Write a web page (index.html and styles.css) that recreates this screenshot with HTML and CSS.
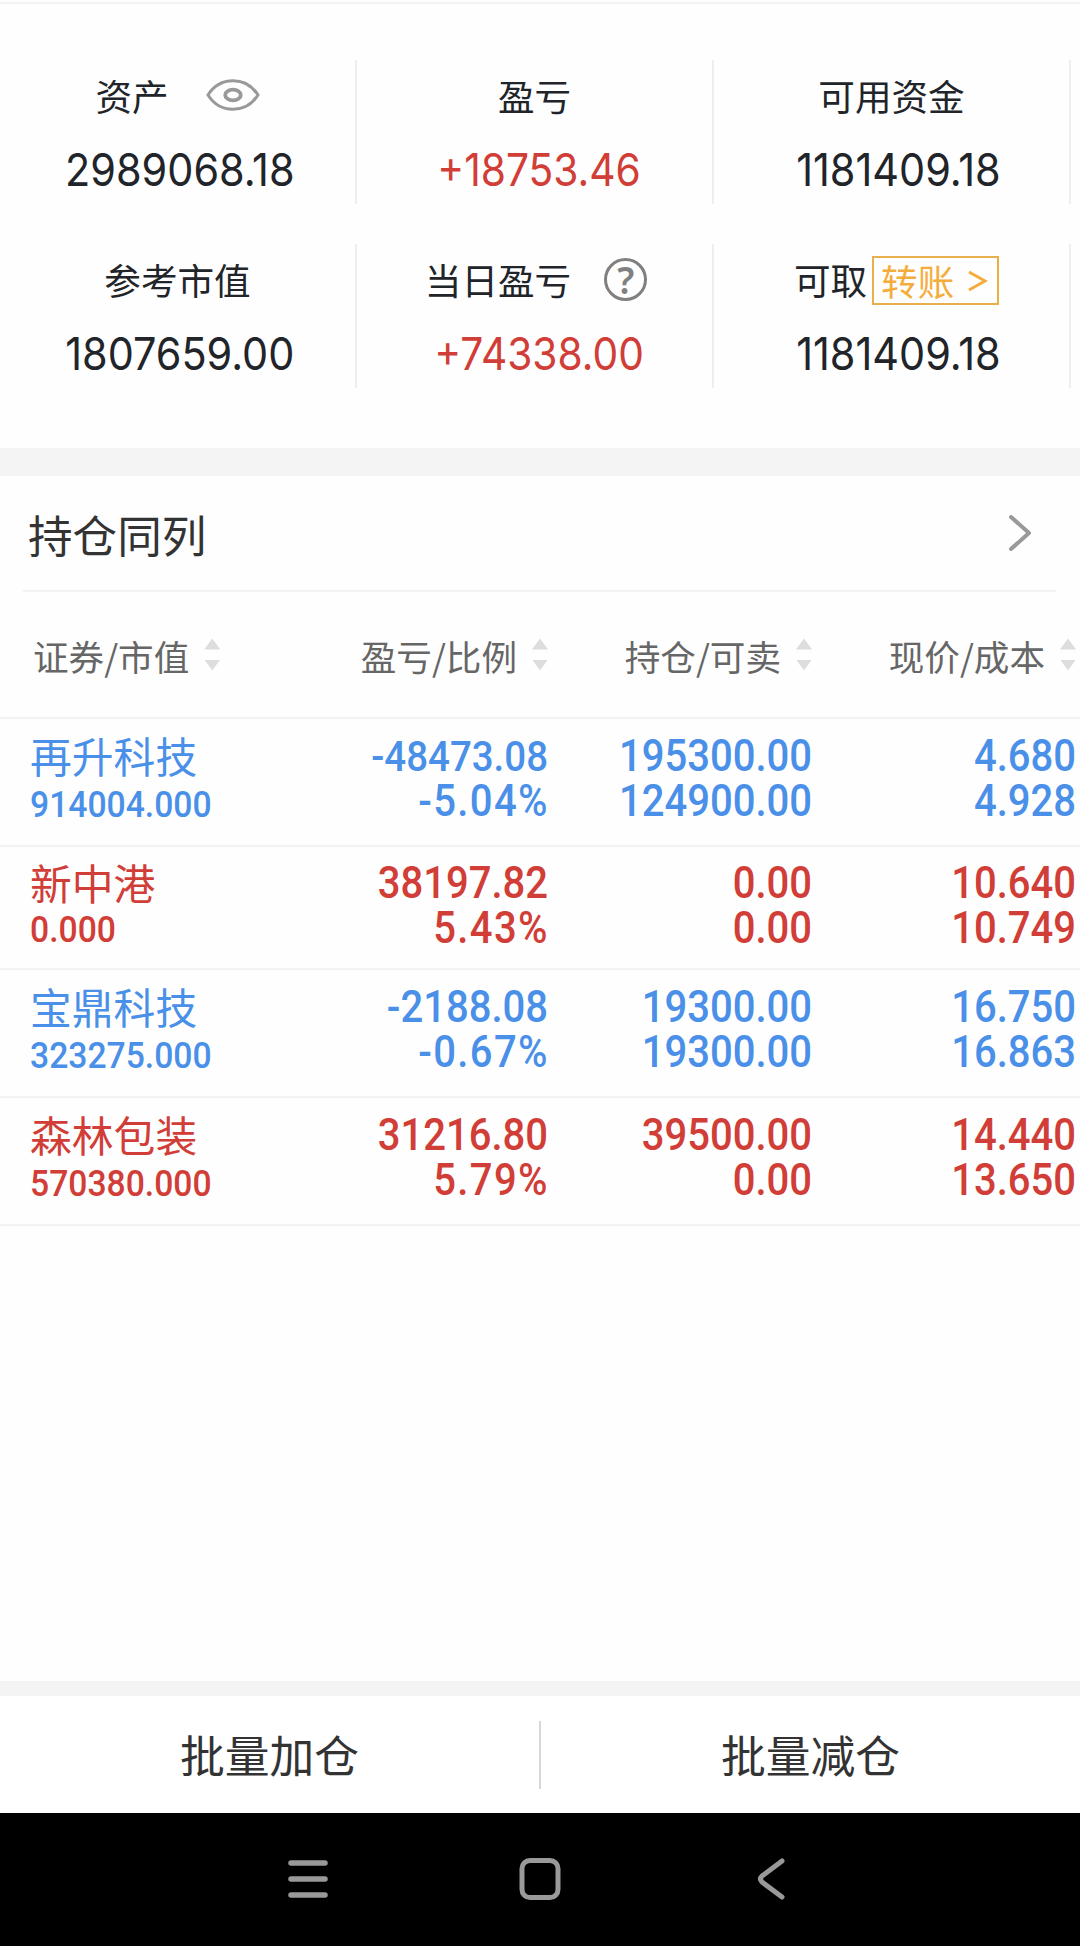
FILE: index.html
```
<!DOCTYPE html>
<html lang="zh-CN">
<head>
    <meta charset="UTF-8">
    <title>持仓</title>
    <link rel="stylesheet" href="styles.css">
</head>
<body>
    <section class="summary">
        <div class="summary-item">
            <div class="label">资产
                <svg class="eye" width="54" height="32" viewBox="0 0 54 32" fill="none" stroke="#999" stroke-width="3">
                    <path d="M2 16C14 -3 40 -3 52 16C40 35 14 35 2 16Z"/>
                    <ellipse cx="27" cy="16" rx="7.8" ry="5.3" stroke-width="3.8"/>
                </svg>
            </div>
            <div class="amount">2989068.18</div>
        </div>
        <div class="summary-item">
            <div class="label">盈亏</div>
            <div class="amount red">+18753.46</div>
        </div>
        <div class="summary-item">
            <div class="label">可用资金</div>
            <div class="amount">1181409.18</div>
        </div>
        <div class="summary-item">
            <div class="label">参考市值</div>
            <div class="amount">1807659.00</div>
        </div>
        <div class="summary-item">
            <div class="label with-help">当日盈亏<span class="help">?</span></div>
            <div class="amount red">+74338.00</div>
        </div>
        <div class="summary-item">
            <div class="label with-link">可取<a class="transfer">转账
                <svg width="20" height="22" viewBox="0 0 20 22" fill="none" stroke="#f4ad3c" stroke-width="3"><path d="M1 2L17 11L1 20"/></svg></a></div>
            <div class="amount">1181409.18</div>
        </div>
    </section>

    <section class="holdings">
        <div class="title-bar">
            <h2>持仓同列</h2>
            <svg width="24" height="38" viewBox="0 0 24 38" fill="none" stroke="#999" stroke-width="4" stroke-linecap="round" stroke-linejoin="round"><path d="M3 3L21 19L3 35"/></svg>
        </div>
        <div class="row head">
            <div class="cell"><span>证券/市值</span><i class="sort"></i></div>
            <div class="cell"><span>盈亏/比例</span><i class="sort"></i></div>
            <div class="cell"><span>持仓/可卖</span><i class="sort"></i></div>
            <div class="cell"><span>现价/成本</span><i class="sort"></i></div>
        </div>
        <div class="row stock blue">
            <div class="name"><p>再升科技</p><span>914004.000</span></div>
            <div class="nums"><p class="long">-48473.08</p><p class="percent">-5.04%</p></div>
            <div class="nums"><p>195300.00</p><p>124900.00</p></div>
            <div class="nums"><p>4.680</p><p>4.928</p></div>
        </div>
        <div class="row stock red short">
            <div class="name"><p>新中港</p><span>0.000</span></div>
            <div class="nums"><p>38197.82</p><p class="percent">5.43%</p></div>
            <div class="nums"><p>0.00</p><p>0.00</p></div>
            <div class="nums"><p>10.640</p><p>10.749</p></div>
        </div>
        <div class="row stock blue">
            <div class="name"><p>宝鼎科技</p><span>323275.000</span></div>
            <div class="nums"><p>-2188.08</p><p class="percent">-0.67%</p></div>
            <div class="nums"><p>19300.00</p><p>19300.00</p></div>
            <div class="nums"><p>16.750</p><p>16.863</p></div>
        </div>
        <div class="row stock red">
            <div class="name"><p>森林包装</p><span>570380.000</span></div>
            <div class="nums"><p>31216.80</p><p class="percent">5.79%</p></div>
            <div class="nums"><p>39500.00</p><p>0.00</p></div>
            <div class="nums"><p>14.440</p><p>13.650</p></div>
        </div>
    </section>

    <footer class="actions">
        <a>批量加仓</a>
        <i class="divider"></i>
        <a>批量减仓</a>
    </footer>

    <nav class="system-nav">
        <svg width="42" height="44" viewBox="0 0 42 44" fill="none" stroke="#999" stroke-width="5.5" stroke-linecap="round"><path d="M4 6H38M4 22H38M4 38H38"/></svg>
        <svg width="42" height="44" viewBox="0 0 42 44" fill="none" stroke="#999" stroke-width="5"><rect x="3" y="3.5" width="36" height="37" rx="8"/></svg>
        <svg width="42" height="44" viewBox="0 0 42 44" fill="none" stroke="#999" stroke-width="5" stroke-linecap="round" stroke-linejoin="round"><path d="M31 4L11 19Q8 22 11 25L31 40"/></svg>
    </nav>
</body>
</html>
```
FILE: styles.css
```
:root {
    --red: #d13d37;
    --blue: #4a90e8;
    --dark: #212429;
    --line: #f3f3f3;
}

* {
    margin: 0;
    padding: 0;
    box-sizing: border-box;
}

body {
    width: 1080px;
    height: 1946px;
    display: flex;
    flex-direction: column;
    overflow: hidden;
    background-color: #fefefe;
    color: var(--dark);
    font-family: 'Noto Sans CJK SC', sans-serif;
}

.red {
    color: var(--red);
}

.blue {
    color: var(--blue);
}

/* account summary */
.summary {
    height: 446px;
    padding-top: 56px;
    margin-top: 2px;
    border-top: 2px solid var(--line);
    display: grid;
    grid-template-columns: repeat(3, 357px);
    grid-template-rows: 144px 144px;
    row-gap: 40px;
    flex-shrink: 0;
}

.summary-item {
    border-right: 2px solid #eee;
    padding-top: 9px;
    text-align: center;
}

.label {
    display: flex;
    justify-content: center;
    align-items: center;
    height: 52px;
    font-size: 36.6px;
    white-space: nowrap;
}

.with-help {
    padding-left: 3px;
}

.with-link {
    padding-left: 10px;
}

.eye {
    margin-left: 37px;
}

.amount {
    margin-top: 24px;
    padding-left: 5px;
    font-family: Inter, sans-serif;
    font-size: 45px;
    line-height: 50px;
    transform: scaleX(0.92);
}

.amount.red {
    padding-left: 10px;
    transform: scaleX(0.905);
}

.summary-item:nth-child(3n) .amount {
    padding-left: 15px;
}

.help {
    width: 43px;
    height: 43px;
    margin-left: 33px;
    border: 3px solid #808080;
    border-radius: 50%;
    color: #808080;
    font-family: 'Noto Sans', sans-serif;
    font-size: 37px;
    font-weight: 600;
    line-height: 37px;
}

.transfer {
    display: flex;
    align-items: center;
    justify-content: space-between;
    width: 127px;
    height: 49px;
    margin: 3px 0 0 5px;
    padding: 0 9px 0 7px;
    border: 2px solid #e8b04c;
    color: #f4ad3c;
}

/* holdings list */
.holdings {
    flex: 1;
    border-top: 28px solid #f4f4f4;
}

.title-bar {
    height: 116px;
    margin: 0 24px 0 23px;
    padding: 0 24px 0 5px;
    border-bottom: 2px solid var(--line);
    display: flex;
    align-items: center;
    justify-content: space-between;
}

.title-bar h2 {
    color: #333;
    font-size: 44.6px;
    font-weight: 400;
}

.row {
    display: grid;
    grid-template-columns: 286px 262px 264px 264px;
    border-bottom: 2px solid var(--line);
}

.head {
    height: 127px;
    color: #666;
    font-size: 35.6px;
}

.cell {
    display: flex;
    align-items: center;
    justify-content: flex-end;
    white-space: nowrap;
}

.cell span {
    padding-top: 1px;
}

.cell:first-child {
    justify-content: flex-start;
    padding-left: 33px;
}

.sort {
    width: 16px;
    height: 32px;
    margin-left: 15px;
    display: flex;
    flex-direction: column;
    justify-content: space-between;
}

.sort::before,
.sort::after {
    content: '';
    height: 11px;
    background-color: #ddd;
    clip-path: polygon(50% 0, 100% 100%, 0 100%);
}

.sort::after {
    clip-path: polygon(0 0, 100% 0, 50% 100%);
}

.stock {
    height: 128px;
}

.stock.short {
    height: 123px;
}

.name {
    padding: 9px 0 0 30px;
    white-space: nowrap;
}

.name p {
    font-size: 41.8px;
    line-height: 54px;
}

.name span {
    display: inline-block;
    font-family: Roboto, sans-serif;
    font-size: 37px;
    font-weight: 500;
    line-height: 45px;
    transform: scaleX(0.91);
    transform-origin: left;
}

.nums {
    padding: 15px 0 0;
    font-family: Roboto, sans-serif;
    font-size: 43.5px;
    font-weight: 500;
    line-height: 45px;
    text-align: right;
    transform: scaleX(0.92);
    transform-origin: right;
}

.nums .long {
    font-size: 41.8px;
}

.nums .percent {
    margin-right: -1px;
    letter-spacing: 1.5px;
}

.short .nums {
    padding-top: 14px;
}

.short .name {
    padding-top: 10px;
}

.short .name p {
    line-height: 50px;
}

/* bottom buttons */
.actions {
    height: 132px;
    border-top: 15px solid #f4f4f4;
    display: flex;
    align-items: center;
    flex-shrink: 0;
    background-color: #fff;
}

.actions a {
    flex: 1;
    padding-bottom: 3px;
    color: #333;
    font-size: 44.8px;
    text-align: center;
}

.divider {
    width: 2px;
    height: 68px;
    background-color: #d8d8d8;
}

.system-nav {
    height: 133px;
    padding-bottom: 2px;
    flex-shrink: 0;
    background-color: #000;
    display: flex;
    align-items: center;
    justify-content: center;
    gap: 190px;
}
```
